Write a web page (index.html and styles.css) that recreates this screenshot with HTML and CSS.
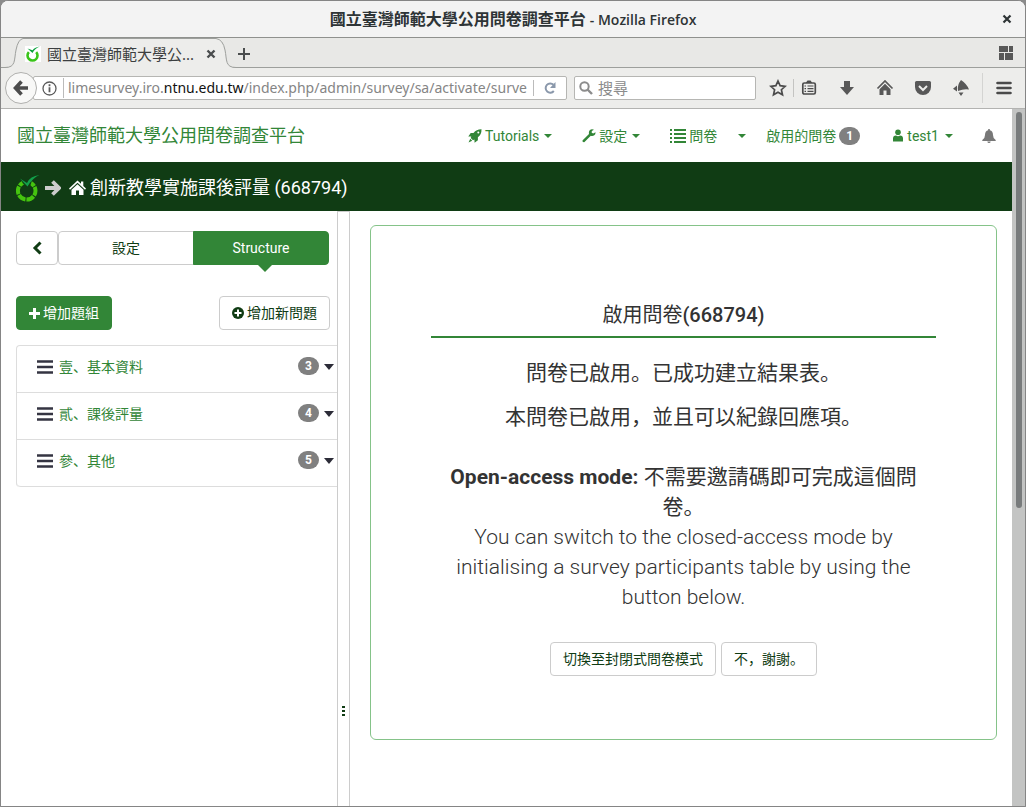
FILE: index.html
```html
<!DOCTYPE html>
<html lang="en">
<head>
<meta charset="utf-8">
<title>國立臺灣師範大學公用問卷調查平台</title>
<link rel="stylesheet" href="styles.css">
</head>
<body>
<div class="window">
  <header class="titlebar">
    <span class="titlebar-text">國立臺灣師範大學公用問卷調查平台 <span class="titlebar-app">- Mozilla Firefox</span></span>
    <button class="titlebar-close" aria-label="Close window"><svg width="10" height="10" viewBox="0 0 10 10"><path d="M1.5 1.5l7 7M8.500 1.500l-7 7" stroke="#2e3436" stroke-width="2.200"/></svg></button>
  </header>

  <div class="tabstrip">
    <svg class="tab-edge" width="18" height="30" viewBox="0 0 18 30"><path d="M0 29.500C11 29.500 9 22 11 12Q13 1.500 18 .5V30H0Z" fill="#ededeb"/><path d="M0 29.500C11 29.500 9 22 11 12Q13 1.500 18 .5" fill="none" stroke="#9d9f9c"/></svg>
    <div class="tab">
      <span class="favicon"><svg width="16" height="16" viewBox="0 0 16 16"><circle cx="7.500" cy="9.500" r="5" fill="none" stroke="#3ac41a" stroke-width="2.600" stroke-dasharray="24 8" stroke-dashoffset="-27"/><path d="M2.500 2.500L7.500 7Q10 2 15 0.500Q10 1 7.500 4.200Z" fill="#0ba23c"/></svg></span>
      <span class="tab-label">國立臺灣師範大學公...</span>
      <button class="tab-close" aria-label="Close tab"><svg width="10" height="10" viewBox="0 0 10 10"><path d="M1.500 1.500l7 7M8.500 1.500l-7 7" stroke="#4a4d4e" stroke-width="2.400"/></svg></button>
    </div>
    <svg class="tab-edge" width="20" height="30" viewBox="0 0 20 30"><path d="M20 29.500C9 29.500 11 22 9 12Q7 1.500 0 .5V30H20Z" fill="#ededeb"/><path d="M20 29.500C9 29.500 11 22 9 12Q7 1.500 0 .5" fill="none" stroke="#9d9f9c"/></svg>
    <button class="tab-new" aria-label="New tab"><svg width="12" height="12" viewBox="0 0 12 12"><path d="M6 0v12M0 6h12" stroke="#4a4d4e" stroke-width="2"/></svg></button>
    <button class="tab-groups" aria-label="Tab groups"><svg width="14" height="14" viewBox="0 0 14 14" fill="#585858"><path d="M0 0h9v6H0zM10 0h4v6h-4zM0 7h5v7H0zM6 7h8v7H6z"/></svg></button>
  </div>

  <div class="toolbar">
    <button class="back" aria-label="Back"><svg width="16" height="16" viewBox="0 0 16 16"><path d="M8.500 1.500L2.500 8l6 6.500M3 8h12" fill="none" stroke="#4c4c4c" stroke-width="3.600"/></svg></button>
    <div class="urlbar">
      <button class="info" aria-label="Site information"><svg width="15" height="15" viewBox="0 0 15 15"><circle cx="7.500" cy="7.500" r="6.500" fill="none" stroke="#5b5b5b" stroke-width="1.300"/><path d="M7.500 3.300v1.900M7.500 6.300v5" stroke="#5b5b5b" stroke-width="1.800"/></svg></button>
      <div class="url" role="textbox" contenteditable="true" aria-label="Address">limesurvey.iro.<span class="url-domain">ntnu.edu.tw</span>/index.php/admin/survey/sa/activate/surve</div>
      <button class="reload" aria-label="Reload"><svg width="14" height="14" viewBox="0 0 14 14"><path d="M10.500 3.800A4.600 4.600 0 1 0 10.800 10" fill="none" stroke="#8a98ab" stroke-width="2"/><path d="M12.500 1v6H7z" fill="#8a98ab"/></svg></button>
    </div>
    <label class="search">
      <svg width="14" height="14" viewBox="0 0 14 14"><circle cx="5.500" cy="5.500" r="4.200" fill="none" stroke="#8c8c8c" stroke-width="2"/><path d="M8.500 8.500l4.500 4.500" stroke="#8c8c8c" stroke-width="2.400"/></svg>
      <input type="text" placeholder="搜尋" aria-label="搜尋">
    </label>
    <div class="tools">
      <button aria-label="Bookmark"><svg width="18" height="18" viewBox="0 0 18 18"><path d="M9 2l2.100 4.700 5.100.6-3.800 3.400 1.100 5.100L9 13.200l-4.500 2.600 1.100-5.100L1.800 7.300l5.100-.6z" fill="none" stroke="#4c4c4c" stroke-width="1.700"/></svg></button>
      <button class="tool-list" aria-label="Bookmarks list"><svg width="18" height="18" viewBox="0 0 18 18"><path d="M6 4V3.500l1.500-2h3l1.500 2V4" fill="#4c4c4c"/><rect x="2.800" y="4" width="12.500" height="11" rx="1.500" fill="none" stroke="#4c4c4c" stroke-width="1.700"/><path d="M4.500 7h1.500M7.500 7h6M4.500 9.700h1.500M7.500 9.700h6M4.500 12.400h1.500M7.500 12.400h6" stroke="#4c4c4c" stroke-width="1.200"/></svg></button>
      <button aria-label="Downloads"><svg width="18" height="18" viewBox="0 0 18 18"><path d="M6 2h6v6h4l-7 8-7-8h4z" fill="#585858"/></svg></button>
      <button aria-label="Home"><svg width="18" height="18" viewBox="0 0 18 18"><path d="M1.500 9.500L9 2l7.500 7.500" fill="none" stroke="#585858" stroke-width="1.700"/><path d="M9 4.800l5.500 5.400V16h-4v-4.500h-3V16h-4v-5.800z" fill="#585858"/></svg></button>
      <button aria-label="Pocket"><svg width="18" height="18" viewBox="0 0 18 18"><path d="M2.500 2h13q1.500 0 1.500 1.500V8a8 8 0 0 1-16 0V3.500Q1 2 2.500 2z" fill="#585858"/><path d="M5 7l4 4 4-4" fill="none" stroke="#ededeb" stroke-width="2"/></svg></button>
      <button aria-label="Extension"><svg width="18" height="18" viewBox="0 0 18 18" fill="#585858"><path d="M9 1q6 4 8 9.500Q12 9.500 6 12Q5 6 9 1zM5 6.500v6L1 9.800zM6.500 13.500h5L9 17z"/></svg></button>
    </div>
    <button class="menu" aria-label="Menu"><svg width="16" height="14" viewBox="0 0 16 14"><path d="M1.500 2h13M1.500 7h13M1.500 12h13" stroke="#4a4a4a" stroke-width="2.600" stroke-linecap="round"/></svg></button>
  </div>

  <div class="viewport">
    <div class="page">
      <nav class="navbar">
        <a class="brand" href="#">國立臺灣師範大學公用問卷調查平台</a>
        <div class="nav-items">
          <a class="nav-item" href="#"><svg width="14" height="14" viewBox="0 0 14 14" fill="currentColor"><path d="M13.500.3Q8.500.2 5.500 4H2.700L.3 7.400l3 .1-.6 1.400 2.300 2.400 1.400-.7.200 3.100L9.900 11.200V8.300Q13.700 5.500 13.500.3z"/><circle cx="10.300" cy="3.600" r="1" fill="#fff"/><path d="M2.300 9.700L.5 13.400l3.700-1.700z"/></svg><span>Tutorials</span><i class="caret"></i></a>
          <a class="nav-item nav-wrench" href="#"><svg width="14" height="14" viewBox="0 0 14 14" fill="currentColor"><path d="M13.500 3.200l-2.300 1.300-1.500-.8.100-1.700L12 .700Q9.500-.5 7.700 1.300 6.500 2.800 7 4.900L.7 11.200Q.2 12 .8 12.800q.8.800 1.700.3L8.800 6.800q2 .6 3.500-.6 1.400-1.200 1.200-3z"/></svg><span>設定</span><i class="caret"></i></a>
          <a class="nav-item nav-list" href="#"><svg width="16" height="16" viewBox="0 0 16 16"><path d="M0 2h2M0 6h2M0 10h2M0 14h2M4 2h12M4 6h12M4 10h12M4 14h12" stroke="currentColor" stroke-width="2"/></svg><span>問卷</span></a>
          <a class="nav-item nav-split" href="#" aria-label="問卷選單"><i class="caret"></i></a>
          <a class="nav-item nav-active" href="#"><span>啟用的問卷</span><span class="badge">1</span></a>
          <a class="nav-item nav-user" href="#"><svg width="10" height="14" viewBox="0 0 10 14" fill="currentColor"><circle cx="5" cy="3.200" r="2.800"/><path d="M0 12.500V9.500Q0 6.500 3 6.500q2 1.300 4 0 3 0 3 3v3z"/></svg><span>test1</span><i class="caret"></i></a>
          <a class="nav-item nav-bell" href="#" aria-label="Notifications"><svg width="14" height="14" viewBox="0 0 14 14" fill="currentColor"><path d="M6.200 0h1.600v1.200Q11 2 11 6q0 3.500 2.700 5v1H.300v-1Q3 9.500 3 6q0-4 3.200-4.800zM5.300 12.500h3.400Q8.500 14 7 14t-1.700-1.500z"/></svg></a>
        </div>
      </nav>

      <div class="surveybar">
        <svg width="24" height="28" viewBox="0 0 24 28"><circle cx="10.700" cy="16.800" r="8.800" fill="none" stroke="#45c40f" stroke-width="4" stroke-dasharray="8 1" stroke-dashoffset="3"/><path d="M4.500 2h13l-3 9-4 2-4-4z" fill="#103c14"/><path d="M4 4.500l7 4.500Q14 2 23.500 1 16.500 4 11.500 12.500z" fill="#12a04a"/></svg>
        <svg class="crumb-arrow" width="16" height="16" viewBox="0 0 16 16"><path d="M0 8h13M7.500 1.500L14 8l-6.500 6.500" fill="none" stroke="#ccc" stroke-width="3.800"/></svg>
        <h1 class="survey-title"><svg width="17" height="15" viewBox="0 0 17 15" fill="#fff"><path d="M8.500.5L12 3.800V1.500h2.300V6L17 8.500l-1 1.200-7.500-6.900L1 9.700 0 8.500zM8.500 4.300l6 5.500V15h-4.500v-4.500H7V15H2.500V9.800z"/></svg><span>創新教學實施課後評量 (668794)</span></h1>
      </div>

      <div class="body">
        <aside class="sidebar">
          <div class="side-tabs">
            <button class="btn btn-back" aria-label="Collapse"><svg width="10" height="14" viewBox="0 0 10 14"><path d="M8.500 1.500L3 7l5.500 5.500" fill="none" stroke="#103c14" stroke-width="3"/></svg></button>
            <button class="btn side-tab">設定</button>
            <button class="btn side-tab side-tab-on">Structure</button>
          </div>
          <div class="side-actions">
            <button class="btn btn-primary"><svg width="11" height="11" viewBox="0 0 11 11"><path d="M5.500 0v11M0 5.500h11" stroke="#fff" stroke-width="3"/></svg><span>增加題組</span></button>
            <button class="btn"><svg width="12" height="12" viewBox="0 0 12 12"><circle cx="6" cy="6" r="6" fill="#103c14"/><path d="M6 2.500v7M2.500 6h7" stroke="#fff" stroke-width="2"/></svg><span>增加新問題</span></button>
          </div>
          <ul class="groups">
            <li class="group"><svg width="16" height="14" viewBox="0 0 16 14"><path d="M0 1.500h16M0 7h16M0 12.500h16" stroke="#343442" stroke-width="2.600"/></svg><a href="#">壹、基本資料</a><span class="badge">3</span><i class="caret caret-dark"></i></li>
            <li class="group"><svg width="16" height="14" viewBox="0 0 16 14"><path d="M0 1.500h16M0 7h16M0 12.500h16" stroke="#343442" stroke-width="2.600"/></svg><a href="#">貳、課後評量</a><span class="badge">4</span><i class="caret caret-dark"></i></li>
            <li class="group"><svg width="16" height="14" viewBox="0 0 16 14"><path d="M0 1.500h16M0 7h16M0 12.500h16" stroke="#343442" stroke-width="2.600"/></svg><a href="#">參、其他</a><span class="badge">5</span><i class="caret caret-dark"></i></li>
          </ul>
        </aside>
        <div class="splitter"><svg width="4" height="10" viewBox="0 0 4 10" fill="#103c14"><path d="M0 0h3v2H0zM0 4h3v2H0zM0 8h3v2H0z"/></svg></div>
        <main class="main">
          <section class="card">
            <h2 class="card-title">啟用問卷<b>(668794)</b></h2>
            <div class="card-text">
              <p>問卷已啟用。已成功建立結果表。</p>
              <p>本問卷已啟用，並且可以紀錄回應項。</p>
              <p class="mode"><strong>Open-access mode:</strong> 不需要邀請碼即可完成這個問卷。<br><span class="light">You can switch to the closed-access mode by initialising a survey participants table by using the button below.</span></p>
            </div>
            <div class="card-actions">
              <button class="btn">切換至封閉式問卷模式</button>
              <button class="btn">不，謝謝。</button>
            </div>
          </section>
        </main>
      </div>
    </div>
    <div class="scrollbar"><div class="thumb"></div></div>
  </div>
</div>
</body>
</html>
```
FILE: styles.css
```css
* { box-sizing: border-box; }

body {
  margin: 0;
  background: #8b8b8b;
  color: #333;
  font: 14px/20px Roboto, "Noto Sans CJK JP", sans-serif;
}

button {
  margin: 0;
  padding: 0;
  border: 0;
  background: none;
  color: inherit;
  font: inherit;
}

a { text-decoration: none; }
svg { display: block; flex: none; }

.window {
  display: flex;
  flex-direction: column;
  height: 100vh;
  border: 1px solid #858585;
  border-radius: 8px 8px 0 0;
  background: #fff;
  overflow: hidden;
}

/* Browser chrome */
.titlebar {
  display: flex;
  flex: none;
  align-items: center;
  height: 37px;
  padding: 0 13px 0 23px;
  border-bottom: 1px solid #8f918e;
  background: #f3f3f3;
  color: #2e3436;
  font: bold 16px/24px "Open Sans", "Noto Sans CJK JP", sans-serif;
}
.titlebar-text { flex: 1; text-align: center; }
.titlebar-app { font-size: 14px; font-weight: 600; }

.tabstrip {
  display: flex;
  flex: none;
  height: 30px;
  padding-right: 12px;
  background: linear-gradient(#9d9f9c, #9d9f9c) 0 100% / 100% 1px no-repeat #e8e8e6;
  color: #3c3f40;
}
.tab-edge { height: 30px; }
.tab-edge:first-child { margin-left: 4px; }
.tab {
  display: flex;
  align-items: center;
  gap: 6px;
  border-top: 1px solid #9d9f9c;
  background: #ededeb;
  font: 15px/22px "Noto Sans", "Noto Sans CJK JP", sans-serif;
}
.favicon { background: #fff; margin-left: 2px; }
.tab-label { width: 153px; white-space: nowrap; }
.tab-new { margin-left: 2px; padding-top: 2px; }
.tab-groups { margin-left: auto; }

.toolbar {
  display: flex;
  flex: none;
  align-items: center;
  height: 41px;
  padding: 0 13px 0 4px;
  border-bottom: 1px solid #b3b3b1;
  background: #ededeb;
}
.back {
  display: grid;
  place-items: center;
  width: 32px;
  height: 32px;
  border: 1px solid #b0b0ae;
  border-radius: 50%;
  background: #f8f8f7;
  z-index: 1;
}
.urlbar {
  display: flex;
  flex: 1;
  align-items: center;
  min-width: 0;
  height: 24px;
  margin: 0 7px 0 -4px;
  border: 1px solid #b6b6b3;
  border-radius: 2px;
  background: #fff;
}
.info { padding: 0 6px 0 8px; }
.url {
  flex: 1;
  height: 20px;
  padding-left: 4px;
  border-left: 1px solid #bbb;
  color: #858585;
  font: 14px/20px "Noto Sans", sans-serif;
  white-space: nowrap;
}
.url-domain { color: #111; }
.reload { padding: 1px 9px; border-left: 1px solid #bbb; }
.search {
  display: flex;
  flex: none;
  align-items: center;
  gap: 5px;
  width: 182px;
  height: 24px;
  padding-left: 4px;
  border: 1px solid #b6b6b3;
  border-radius: 2px;
  background: #fff;
}
.search input {
  flex: 1;
  min-width: 0;
  padding: 0;
  border: 0;
  outline: 0;
  background: none;
  font: 15px/20px "Noto Sans CJK JP", sans-serif;
}
.search input::placeholder { color: #8c8c8c; opacity: 1; }
.tools { display: flex; gap: 20px; margin: 0 12px 0 13px; }
.tool-list { border-left: 1px solid #c4c4c2; margin-left: -14px; padding-left: 6px; }
.menu { padding: 8px 0 8px 13px; border-left: 1px solid #d4d4d2; }

.viewport { display: flex; flex: 1; min-height: 0; }
.page { display: flex; flex: 1; flex-direction: column; min-width: 0; }
.scrollbar {
  flex: none;
  width: 13px;
  padding: 3px 3px 0 4px;
  background: #c3c4c3;
}
.thumb { height: 57%; border-radius: 3px; background: #787b7c; }

/* Navigation */
.navbar {
  display: flex;
  flex: none;
  align-items: center;
  justify-content: space-between;
  height: 53px;
  padding: 0 1px 0 16px;
}
.brand { color: #328637; font-size: 18px; }
.nav-items { display: flex; }
.nav-item {
  display: flex;
  align-items: center;
  gap: 3px;
  padding: 0 15px;
  color: #328637;
}
.nav-item .caret { margin-left: 2px; }
.nav-list { padding-right: 10px; }
.nav-split { padding: 0 10px 0 9px; }
.nav-active { padding-left: 10px; }
.nav-user { gap: 4px; padding-left: 18px; }
.nav-bell { padding-left: 14px; color: #777; }
.caret {
  border-top: 4px solid currentColor;
  border-right: 4px solid transparent;
  border-left: 4px solid transparent;
}
.caret-dark {
  border-top: 6px solid #2c2c38;
  border-right-width: 5px;
  border-left-width: 5px;
}
.badge {
  min-width: 21px;
  border-radius: 10px;
  background: #808080;
  color: #fff;
  font-size: 12px;
  font-weight: bold;
  line-height: 18px;
  text-align: center;
}

.surveybar {
  display: flex;
  flex: none;
  align-items: center;
  height: 49px;
  padding: 2px 0 0 15px;
  background: #103c14;
}
.crumb-arrow { margin: 0 8px 0 5px; }
.survey-title {
  display: flex;
  align-items: center;
  gap: 4px;
  margin: 0;
  color: #fff;
  font-size: 18px;
  font-weight: 400;
}

/* Buttons */
.btn {
  display: flex;
  align-items: center;
  justify-content: center;
  gap: 3px;
  height: 34px;
  padding: 0 12px;
  border: 1px solid #ccc;
  border-radius: 4px;
  background: #fff;
  color: #103c14;
}
.btn-primary { border-color: #328637; background: #328637; color: #fff; }

/* Sidebar */
.body { display: flex; flex: 1; min-height: 0; }
.sidebar {
  flex: none;
  width: 336px;
  padding: 20px 0 0 15px;
  overflow: hidden;
}
.side-tabs { display: flex; margin-right: 8px; }
.btn-back { flex: none; width: 42px; }
.side-tab { flex: 1; border-radius: 4px 0 0 4px; }
.side-tab-on {
  position: relative;
  margin-left: -1px;
  border-color: #328637;
  border-radius: 0 4px 4px 0;
  background: #328637;
  color: #fff;
}
.side-tab-on::after {
  content: "";
  position: absolute;
  top: 100%;
  left: 50%;
  margin-left: -4px;
  border-top: 8px solid #328637;
  border-right: 8px solid transparent;
  border-left: 8px solid transparent;
}
.side-actions {
  display: flex;
  justify-content: space-between;
  margin: 31px 7px 15px 0;
}
.groups {
  margin: 0 -16px 0 0;
  padding: 0;
  border: 1px solid #ddd;
  border-bottom: 0;
  border-radius: 4px;
  list-style: none;
}
.group {
  display: flex;
  align-items: center;
  height: 47px;
  padding: 0 18px 5px 20px;
  border-bottom: 1px solid #ddd;
}
.group:last-child { border-radius: 0 0 4px 4px; }
.group a { flex: 1; margin-left: 6px; color: #328637; }
.group .badge { margin-bottom: 2px; }
.group .caret { margin-left: 5px; }

.splitter {
  display: grid;
  flex: none;
  align-content: end;
  width: 13px;
  padding: 0 0 90px 4px;
  border: 1px solid #ccc;
  border-bottom: 0;
}

/* Main panel */
.main { flex: 1; min-width: 0; padding: 14px 15px 0 20px; }
.card {
  padding: 74px 60px 63px;
  border: 1px solid #85c389;
  border-radius: 6px;
}
.card-title {
  margin: 0;
  padding-bottom: 6px;
  border-bottom: 2px solid #328637;
  font-size: 20px;
  font-weight: 400;
  line-height: 30px;
  text-align: center;
}
.card-title b { font-weight: 500; }
.card-text {
  padding: 20px 15px 30px;
  font-size: 21px;
  line-height: 30px;
  text-align: center;
}
.card-text p { margin: 0 0 14px; }
.card-text .mode { margin: 30px 0 0; }
.light { font-weight: 300; }
.card-actions { display: flex; justify-content: center; gap: 5px; }
```
